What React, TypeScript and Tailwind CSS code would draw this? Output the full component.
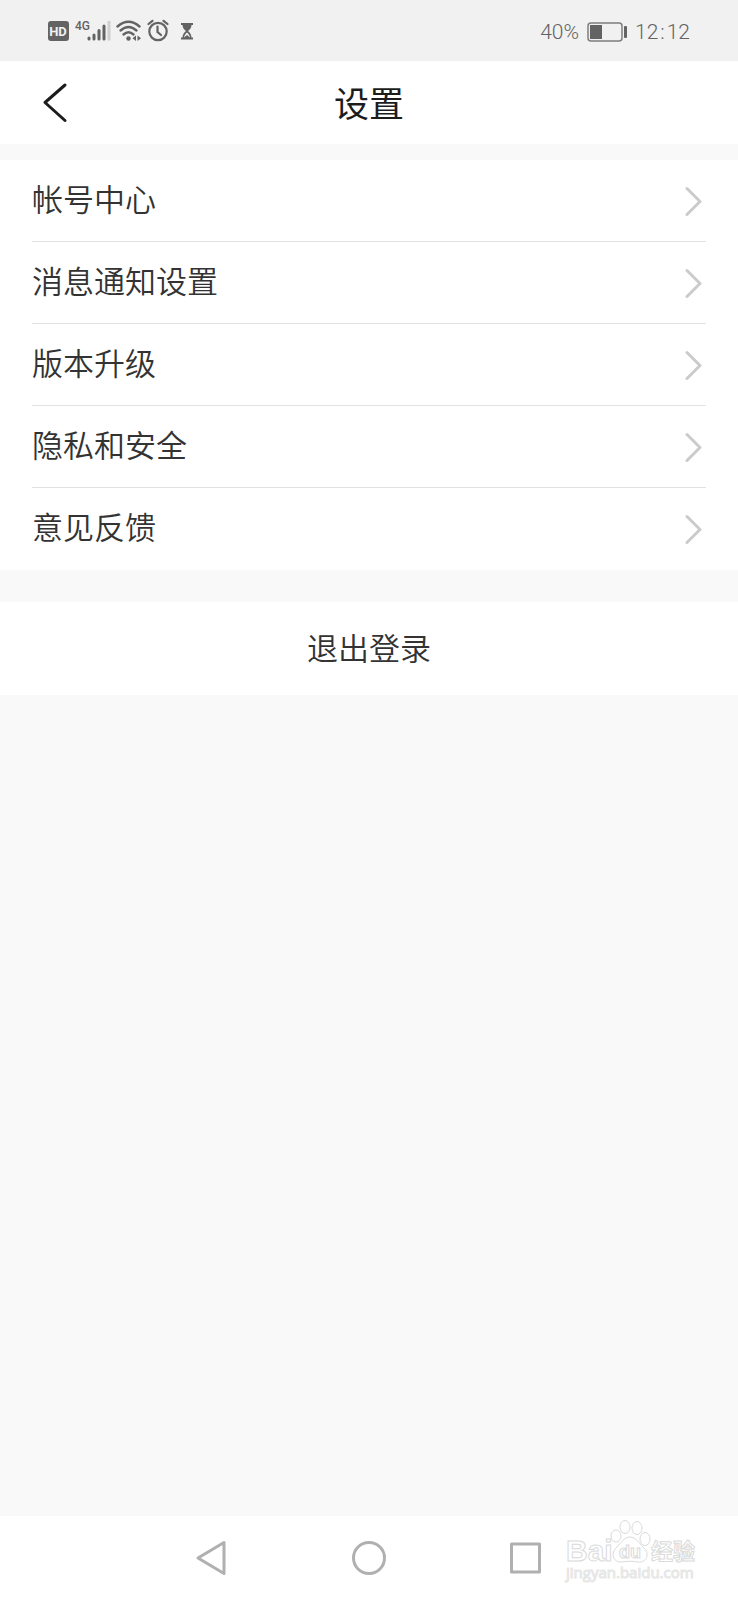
import React from 'react';

const menuItems = [
  { id: 'account', label: '帐号中心' },
  { id: 'notifications', label: '消息通知设置' },
  { id: 'version', label: '版本升级' },
  { id: 'privacy', label: '隐私和安全' },
  { id: 'feedback', label: '意见反馈' },
];

function SignalIcons() {
  return (
    <svg width="146" height="24" viewBox="0 0 146 24" fill="none" aria-hidden="true">
      {/* HD */}
      <rect x="0" y="2" width="21" height="20" rx="3" fill="#636363" />
      <text x="10" y="17" textAnchor="middle" fontSize="13" fontWeight="700" fontFamily="Roboto, sans-serif" fill="#f1f1f1">HD</text>
      {/* 4G and bars */}
      <text x="27" y="11" fontSize="12" fontWeight="500" fontFamily="Roboto, sans-serif" fill="#636363">4G</text>
      <g strokeWidth="3" strokeLinecap="round" stroke="#636363">
        <path d="M41 19v1" />
        <path d="M46 16v4" />
        <path d="M51 11.500v8.500" />
        <path d="M56 7v13" />
      </g>
      <path d="M61 2v19.500" stroke="#cfcfcf" strokeWidth="3" />
      {/* wifi */}
      <g stroke="#636363" strokeWidth="2.400" strokeLinecap="round">
        <path d="M69.500 7.500Q80.500-2 91.500 7.500" />
        <path d="M72.500 11.500Q80.500 4.500 88.500 11.500" />
        <path d="M75.500 15.500Q80.500 11 85.500 15.500" />
      </g>
      <circle cx="80.500" cy="19.500" r="2.200" fill="#636363" />
      <path d="M88 16.500v5.500l-3.500-2.700zM89.500 16.500v5.500l3.500-2.700z" fill="#636363" />
      {/* alarm */}
      <g stroke="#636363" strokeWidth="2.200" strokeLinecap="round">
        <circle cx="110" cy="12.500" r="8.700" />
        <path d="M109.500 7.500v5.500l3.500 3" />
        <path d="M100.500 5l4-3.200M115.500 1.800l4 3.200" />
      </g>
      {/* hourglass */}
      <path d="M133 4h12v2h-1.500c0 3-2 5-3.500 6 1.500 1 3.500 3.500 3.500 6.500h1.500v2h-12v-2h1.500c0-3 2-5.500 3.500-6.500-1.500-1-3.500-3-3.500-6h-1.500z" fill="#636363" />
      <path d="M136 18.500c.3-2.200 1.500-3.500 3-5 1.500 1.500 2.700 2.800 3 5l-3-2.500z" fill="#f1f1f1" />
    </svg>
  );
}

function BatteryIcon() {
  return (
    <svg width="40" height="20" viewBox="0 0 40 20" fill="none" aria-hidden="true">
      <rect x="1" y="1" width="34" height="18" rx="3" stroke="#7d7d7d" strokeWidth="1.500" />
      <rect x="3" y="3" width="12" height="14" fill="#636363" />
      <rect x="37" y="4" width="3" height="12" rx="1" fill="#636363" />
    </svg>
  );
}

function StatusBar() {
  return (
    <div className="flex h-[61px] items-center justify-between bg-[#f1f1f1] px-12 font-['Roboto',sans-serif] text-[21px] leading-6 font-light text-[#636363]">
      <SignalIcons />
      <div className="flex items-center gap-2 pt-0.5">
        <span>40%</span>
        <BatteryIcon />
        <time>
          12<span className="px-0.5">:</span>12
        </time>
      </div>
    </div>
  );
}

function Header() {
  return (
    <header className="grid h-[83px] grid-cols-[1fr_auto_1fr] items-center bg-white px-10">
      <button type="button" aria-label="返回" className="justify-self-start">
        <svg width="30" height="42" viewBox="0 0 30 42" fill="none" stroke="#1c1c1c" strokeWidth="3" strokeLinecap="round" strokeLinejoin="round">
          <path d="M25 3L5 20.500L25 38.500" />
        </svg>
      </button>
      <h1 className="pt-1 text-[35px] leading-10 font-normal text-[#1c1c1c]">设置</h1>
    </header>
  );
}

function MenuRow({ label }: { label: string }) {
  return (
    <li className="border-b border-[#e2e2e2] last:border-transparent">
      <button type="button" className="flex h-[81px] w-full items-center justify-between pr-1 text-left">
        <span>{label}</span>
        <svg width="17" height="30" viewBox="0 0 17 30" fill="none" stroke="#cbcbcb" strokeWidth="3" strokeLinecap="round" strokeLinejoin="round" aria-hidden="true">
          <path d="M2 2.500L15 15.500L2 28.500" />
        </svg>
      </button>
    </li>
  );
}

function Watermark() {
  return (
    <svg className="absolute right-10 bottom-4 h-16 w-[134px]" viewBox="0 0 134 64" fill="#ffffff" stroke="#dadada" strokeWidth="1" aria-label="Baidu 经验">
      <text x="2" y="41" fontSize="30" fontWeight="700" fontFamily="Liberation Sans, sans-serif">Bai</text>
      <ellipse cx="52" cy="16" rx="5" ry="6" />
      <ellipse cx="61" cy="7" rx="5" ry="6.500" />
      <ellipse cx="73" cy="8" rx="5" ry="6.500" />
      <ellipse cx="81" cy="19" rx="5" ry="6.500" />
      <path d="M66 17c6 0 9 6 13 10 8 7 3 16-5 15-5-1-11-1-16 0-9 1-12-9-5-15 4-4 7-10 13-10z" />
      <text x="66" y="38" textAnchor="middle" fontSize="18" fontWeight="700" fontFamily="Liberation Sans, sans-serif">du</text>
      <text x="87" y="39" fontSize="22" fontWeight="700" fontFamily="Noto Sans CJK SC, sans-serif">经验</text>
      <text x="2" y="58" fontSize="15" fontWeight="400" fill="#f6f6f6" stroke="#e6e6e6" fontFamily="Open Sans, sans-serif">jingyan.baidu.com</text>
    </svg>
  );
}

function NavBar() {
  return (
    <nav className="relative flex h-[84px] items-center justify-center gap-[119px] bg-white">
      <button type="button" aria-label="后退">
        <svg width="38" height="38" viewBox="0 0 38 38" fill="none" stroke="#b0b0b0" strokeWidth="3" strokeLinejoin="round">
          <path d="M31 3.500V34.500L5 19z" />
        </svg>
      </button>
      <button type="button" aria-label="主页">
        <svg width="38" height="38" viewBox="0 0 38 38" fill="none" stroke="#b0b0b0" strokeWidth="3">
          <circle cx="19" cy="19" r="15.500" />
        </svg>
      </button>
      <button type="button" aria-label="最近任务">
        <svg width="38" height="38" viewBox="0 0 38 38" fill="none" stroke="#b0b0b0" strokeWidth="3" strokeLinejoin="round">
          <rect x="4.500" y="5" width="28" height="28" />
        </svg>
      </button>
      <Watermark />
    </nav>
  );
}

export default function App() {
  return (
    <div className="flex min-h-screen flex-col bg-[#f9f9f9] font-['Liberation_Sans','Noto_Sans_CJK_SC',sans-serif] text-[31px] leading-10 font-[350] text-[#333333]">
      <StatusBar />
      <Header />
      <main className="flex-1 pt-4">
        <ul className="bg-white px-8">
          {menuItems.map((item) => (
            <MenuRow key={item.id} label={item.label} />
          ))}
        </ul>
        <button type="button" className="mt-8 h-[93px] w-full bg-white pt-0.5">
          退出登录
        </button>
      </main>
      <NavBar />
    </div>
  );
}
